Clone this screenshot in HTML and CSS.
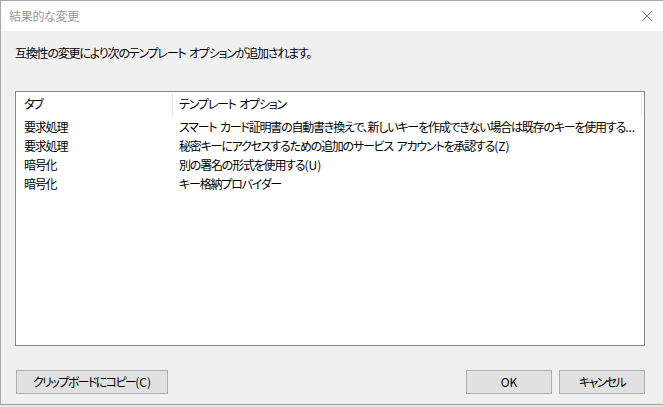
FILE: index.html
```html
<!DOCTYPE html>
<html lang="ja">
<head>
<meta charset="utf-8">
<link rel="stylesheet" href="styles.css">
</head>
<body>
<div class="window">
  <div class="titlebar">
    <span class="title">結果的な変更</span>
    <svg class="close" width="12" height="12" viewBox="0 0 12 12"><path d="M1 1 L11 11 M11 1 L1 11" stroke="#7a7a7a" stroke-width="1" fill="none"/></svg>
  </div>
  <div class="content">
    <p class="msg">互換性の変更により次のテンプレート オプションが追加されます。</p>
    <div class="listbox">
      <div class="row header">
        <div class="c1">タブ</div>
        <div class="c2">テンプレート オプション</div>
      </div>
      <div class="row">
        <div class="c1">要求処理</div>
        <div class="c2">スマート カード証明書の自動書き換えで、新しいキーを作成できない場合は既存のキーを使用する<span class="lat">...</span></div>
      </div>
      <div class="row">
        <div class="c1">要求処理</div>
        <div class="c2">秘密キーにアクセスするための追加のサービス アカウントを承認する<span class="lat">(Z)</span></div>
      </div>
      <div class="row">
        <div class="c1">暗号化</div>
        <div class="c2">別の署名の形式を使用する<span class="lat">(U)</span></div>
      </div>
      <div class="row">
        <div class="c1">暗号化</div>
        <div class="c2">キー格納プロバイダー</div>
      </div>
    </div>
    <div class="buttons">
      <button class="btn copy">クリップボードにコピー<span class="lat">(C)</span></button>
      <div class="spacer"></div>
      <button class="btn ok">OK</button>
      <button class="btn cancel">キャンセル</button>
    </div>
  </div>
</div>
</body>
</html>
```

FILE: styles.css
```css
* { box-sizing: border-box; }
html, body { margin: 0; padding: 0; }
body {
  width: 663px;
  height: 407px;
  background: #e8e8e8;
  font-family: "Noto Sans CJK JP", "Noto Sans", sans-serif;
  font-feature-settings: "palt";
  font-size: 12px;
  letter-spacing: -1.2px;
  word-spacing: 2px;
  color: #000;
  overflow: hidden;
}
.lat { letter-spacing: 0; }
.window {
  width: 663px;
  height: 405px;
  border-top: 1px solid #a8a8a8;
  border-left: 1px solid #a8a8a8;
  border-bottom: 1px solid #a0a0a0;
  background: #f0f0f0;
  display: flex;
  flex-direction: column;
}
.titlebar {
  height: 30px;
  background: #fff;
  display: flex;
  align-items: center;
  padding: 0 10px 0 8px;
}
.title {
  color: #999;
  font-size: 12px;
  letter-spacing: -0.3px;
  line-height: 16px;
  flex: 1;
}
.close { display: block; }
.content {
  flex: 1;
  display: flex;
  flex-direction: column;
  padding: 14px 18px 10px 14px;
}
.msg {
  margin: 0;
  line-height: 16px;
  height: 16px;
}
.listbox {
  margin-top: 30px;
  height: 255px;
  border: 1px solid #828790;
  background: #fff;
}
.row {
  display: grid;
  grid-template-columns: 157px 469px;
  height: 19px;
  line-height: 19px;
}
.row.header {
  height: 25px;
}
.c1 {
  padding-left: 8px;
  white-space: nowrap;
}
.c2 {
  padding-left: 6px;
  white-space: nowrap;
  overflow: hidden;
}
.header .c1,
.header .c2 {
  border-right: 1px solid #e5e5e5;
  margin: 1px 0;
  line-height: 22px;
}
.buttons {
  margin-top: 24px;
  display: flex;
  gap: 7px;
}
.spacer { flex: 1; }
.btn {
  height: 24px;
  background: #e1e1e1;
  border: 1px solid #adadad;
  font-family: inherit;
  font-feature-settings: "palt";
  font-size: 12px;
  letter-spacing: -1.6px;
  color: #000;
  padding: 0;
  margin: 0;
  line-height: 20px;
}
.copy { width: 152px; margin-left: 1px; }
.ok { width: 86px; letter-spacing: 0; }
.cancel { width: 86px; }
```
